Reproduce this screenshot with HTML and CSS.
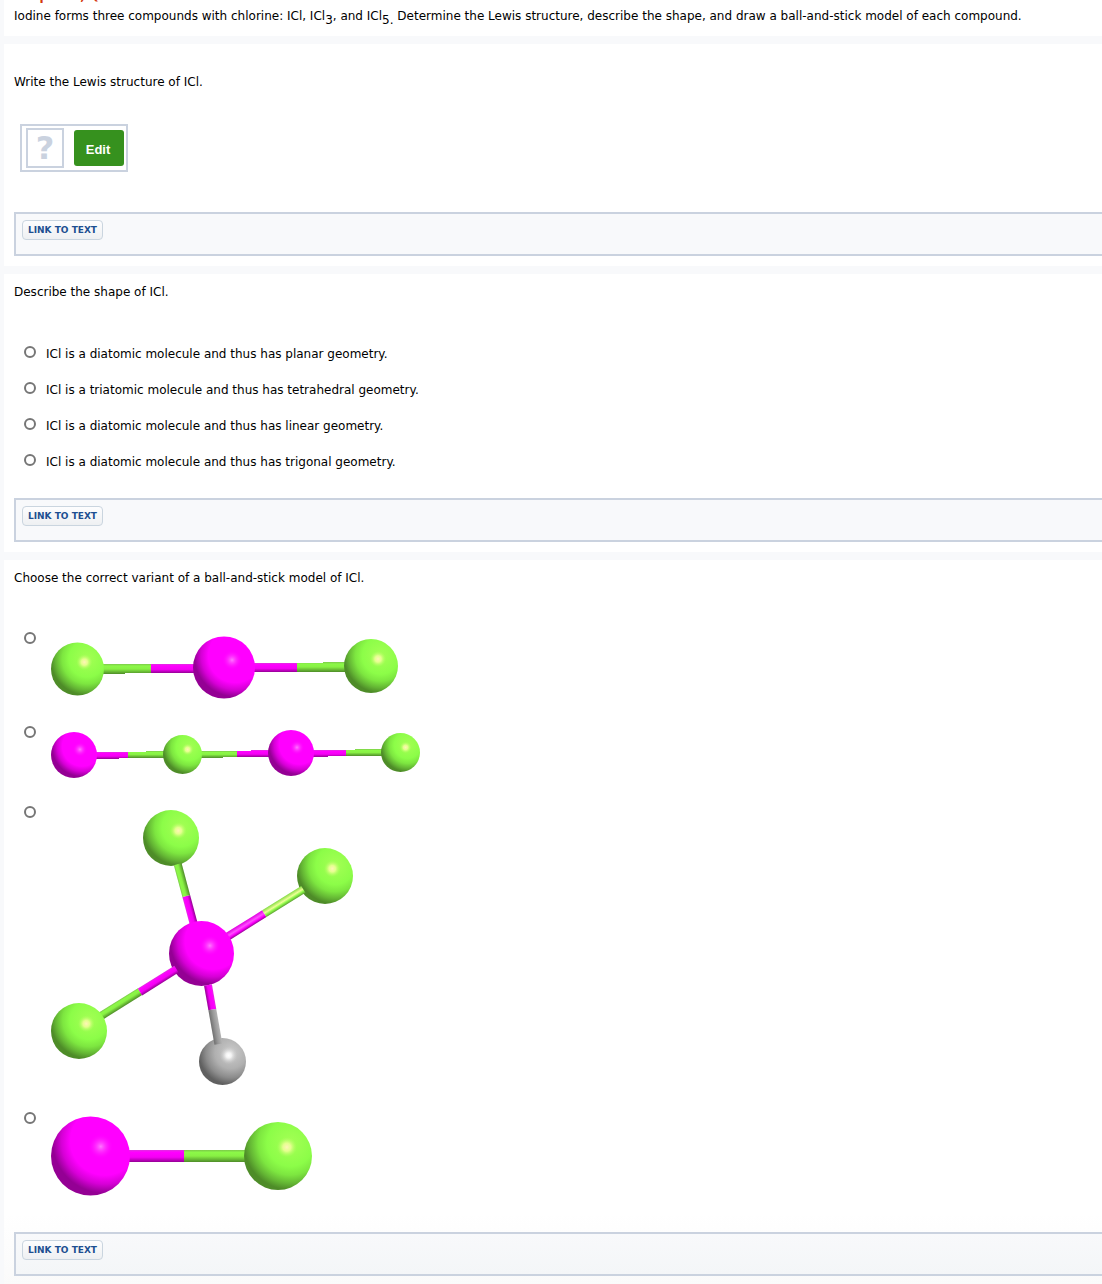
FILE: index.html
```html
<!DOCTYPE html>
<html lang="en">
<head>
  <meta charset="UTF-8">
  <meta name="viewport" content="width=device-width, initial-scale=1.0">
  <title>Chapter 5, Question 27</title>
  <link rel="stylesheet" href="styles.css">
</head>
<body>
  <!-- shared gradients for the molecule drawings -->
  <svg class="defs" width="0" height="0" aria-hidden="true">
    <defs>
      <radialGradient id="green" cx=".68" cy=".31" r=".76">
        <stop offset="0" stop-color="#a4ff54"/>
        <stop offset=".45" stop-color="#8cfd48"/>
        <stop offset=".62" stop-color="#7de640"/>
        <stop offset=".78" stop-color="#64b634"/>
        <stop offset=".9" stop-color="#4e8c28"/>
        <stop offset="1" stop-color="#4e8c28"/>
      </radialGradient>
      <radialGradient id="pink" cx=".68" cy=".31" r=".76">
        <stop offset="0" stop-color="#ff00ff"/>
        <stop offset=".57" stop-color="#ff00ff"/>
        <stop offset=".72" stop-color="#d600d6"/>
        <stop offset=".87" stop-color="#940094"/>
        <stop offset="1" stop-color="#940094"/>
      </radialGradient>
      <radialGradient id="gray" cx=".68" cy=".31" r=".76">
        <stop offset="0" stop-color="#cccccc"/>
        <stop offset=".45" stop-color="#b0b0b0"/>
        <stop offset=".7" stop-color="#8c8c8c"/>
        <stop offset=".9" stop-color="#606060"/>
        <stop offset="1" stop-color="#606060"/>
      </radialGradient>
      <radialGradient id="shineGreen">
        <stop offset="0" stop-color="#fff4b8"/>
        <stop offset=".4" stop-color="#f0ff98" stop-opacity=".85"/>
        <stop offset="1" stop-color="#b0ff60" stop-opacity="0"/>
      </radialGradient>
      <radialGradient id="shinePink">
        <stop offset="0" stop-color="#ff78ff"/>
        <stop offset="1" stop-color="#ff00ff" stop-opacity="0"/>
      </radialGradient>
      <radialGradient id="shineGray">
        <stop offset="0" stop-color="#ffffff"/>
        <stop offset=".3" stop-color="#ffffff" stop-opacity=".8"/>
        <stop offset="1" stop-color="#cccccc" stop-opacity="0"/>
      </radialGradient>
      <linearGradient id="rodGreen" x2="0" y2="1">
        <stop offset="0" stop-color="#7cc94a"/>
        <stop offset=".2" stop-color="#8cf848"/>
        <stop offset=".5" stop-color="#88f044"/>
        <stop offset="1" stop-color="#4e8c28"/>
      </linearGradient>
      <linearGradient id="rodPink" x2="0" y2="1">
        <stop offset="0" stop-color="#e030e0"/>
        <stop offset=".2" stop-color="#ff00ff"/>
        <stop offset=".6" stop-color="#f400f4"/>
        <stop offset="1" stop-color="#940094"/>
      </linearGradient>
      <linearGradient id="rodGray" x2="0" y2="1">
        <stop offset="0" stop-color="#b4b4b4"/>
        <stop offset=".5" stop-color="#989898"/>
        <stop offset="1" stop-color="#707070"/>
      </linearGradient>
      <linearGradient id="rodGreenLit" x2="0" y2="1">
        <stop offset="0" stop-color="#84dc44"/>
        <stop offset=".45" stop-color="#eeff98"/>
        <stop offset=".7" stop-color="#8cfa48"/>
        <stop offset="1" stop-color="#5ca032"/>
      </linearGradient>
      <linearGradient id="rodPinkLit" x2="0" y2="1">
        <stop offset="0" stop-color="#e000e0"/>
        <stop offset=".45" stop-color="#ff50ff"/>
        <stop offset=".7" stop-color="#ff00ff"/>
        <stop offset="1" stop-color="#980098"/>
      </linearGradient>
      <symbol id="cl" viewBox="0 0 100 100">
        <circle cx="50" cy="50" r="50" fill="url(#green)"/>
        <circle cx="63" cy="37" r="15" fill="url(#shineGreen)"/>
      </symbol>
      <symbol id="i" viewBox="0 0 100 100">
        <circle cx="50" cy="50" r="50" fill="url(#pink)"/>
        <circle cx="63" cy="38" r="16" fill="url(#shinePink)"/>
      </symbol>
      <symbol id="x" viewBox="0 0 100 100">
        <circle cx="50" cy="50" r="50" fill="url(#gray)"/>
        <circle cx="63" cy="37" r="19" fill="url(#shineGray)"/>
      </symbol>
    </defs>
  </svg>

  <div class="panel intro">
    <h1>Chapter 5, Question 27</h1>
    <p>Iodine forms three compounds with chlorine: ICl, ICl<sub>3</sub>, and ICl<sub>5.</sub> Determine the Lewis structure, describe the shape, and draw a ball-and-stick model of each compound.</p>
  </div>

  <div class="panel lewis">
    <p>Write the Lewis structure of ICl.</p>
    <div class="sketch">
      <span class="unknown">?</span>
      <button type="button" class="edit">Edit</button>
    </div>
    <div class="linkbar"><a href="#">LINK TO TEXT</a></div>
  </div>

  <div class="panel shape">
    <p id="shapeq">Describe the shape of ICl.</p>
    <div class="options" role="radiogroup" aria-labelledby="shapeq">
      <label><input type="radio" name="shape"><span>ICl is a diatomic molecule and thus has planar geometry.</span></label>
      <label><input type="radio" name="shape"><span>ICl is a triatomic molecule and thus has tetrahedral geometry.</span></label>
      <label><input type="radio" name="shape"><span>ICl is a diatomic molecule and thus has linear geometry.</span></label>
      <label><input type="radio" name="shape"><span>ICl is a diatomic molecule and thus has trigonal geometry.</span></label>
    </div>
    <div class="linkbar"><a href="#">LINK TO TEXT</a></div>
  </div>

  <div class="panel model">
    <p id="modelq">Choose the correct variant of a ball-and-stick model of ICl.</p>
    <div class="models" role="radiogroup" aria-labelledby="modelq">
      <label>
        <input type="radio" name="model">
        <svg width="348" height="64" viewBox="0 0 348 64" role="img" aria-label="Green, pink, green">
          <path d="M50 28h50v9H74v1H50z" fill="url(#rodGreen)"/>
          <path d="M100 28h50v9h-50z" fill="url(#rodPink)"/>
          <path d="M200 27h46v9h-46z" fill="url(#rodPink)"/>
          <path d="M246 27h26v-1h26v10h-52z" fill="url(#rodGreen)"/>
          <use href="#cl" x="0" y="6" width="53" height="54"/>
          <use href="#i" x="142" y="0" width="62" height="63"/>
          <use href="#cl" x="293" y="3" width="54" height="54"/>
        </svg>
      </label>
      <label>
        <input type="radio" name="model">
        <svg width="370" height="50" viewBox="0 0 370 50" role="img" aria-label="Pink, green, pink, green">
          <path d="M43 22h34v6h-9v1H43z" fill="url(#rodPink)"/>
          <path d="M77 22h18v-1h20v7H77z" fill="url(#rodGreen)"/>
          <path d="M148 21h38v6h-14v1h-24z" fill="url(#rodGreen)"/>
          <path d="M186 21h14v-1h21v7h-35z" fill="url(#rodPink)"/>
          <path d="M260 20h35v6h-18v1h-17z" fill="url(#rodPink)"/>
          <path d="M295 20h9v-1h28v7h-37z" fill="url(#rodGreen)"/>
          <use href="#i" x="0" y="2" width="46" height="46"/>
          <use href="#cl" x="112" y="5" width="39" height="39"/>
          <use href="#i" x="217" y="0" width="46" height="46"/>
          <use href="#cl" x="330" y="3" width="39" height="39"/>
        </svg>
      </label>
      <label>
        <input type="radio" name="model">
        <svg width="302" height="276" viewBox="0 0 302 276" role="img" aria-label="Pink centre with three green balls and one gray ball">
          <use href="#cl" x="92" y="0" width="56" height="56"/>
          <g transform="translate(143 115) rotate(-105)">
            <path d="M0-4h30v8H0z" fill="url(#rodPink)"/>
            <path d="M30-4h33v8H30z" fill="url(#rodGreen)"/>
          </g>
          <use href="#cl" x="246" y="38" width="56" height="56"/>
          <g transform="translate(176 127) rotate(-32)">
            <path d="M0-4h44v8H0z" fill="url(#rodPinkLit)"/>
            <path d="M44-4h46v8H44z" fill="url(#rodGreenLit)"/>
          </g>
          <g transform="translate(50 206) rotate(-32)">
            <path d="M0-4h46v8H0z" fill="url(#rodGreen)"/>
          </g>
          <use href="#i" x="118" y="111" width="65" height="65"/>
          <g transform="translate(89 182) rotate(-32)">
            <path d="M0-4h43v8H0z" fill="url(#rodPink)"/>
          </g>
          <use href="#cl" x="0" y="193" width="56" height="56"/>
          <use href="#x" x="148" y="228" width="47" height="47"/>
          <g transform="translate(157 175) rotate(80)">
            <path d="M0-4h25v8H0z" fill="url(#rodPink)"/>
            <path d="M25-4h35v8H25z" fill="url(#rodGray)"/>
          </g>
        </svg>
      </label>
      <label>
        <input type="radio" name="model">
        <svg width="262" height="80" viewBox="0 0 262 80" role="img" aria-label="Pink, green">
          <path d="M76 34h57v12H76z" fill="url(#rodPink)"/>
          <path d="M133 34h65v12h-65z" fill="url(#rodGreen)"/>
          <use href="#i" x="0" y="0" width="79" height="80"/>
          <use href="#cl" x="193" y="6" width="68" height="68"/>
        </svg>
      </label>
    </div>
    <div class="linkbar"><a href="#">LINK TO TEXT</a></div>
  </div>
</body>
</html>
```

FILE: styles.css
```css
body {
  font-family: Verdana, "DejaVu Sans", sans-serif;
  font-size: 12px;
  line-height: 16px;
  color: #000;
  background: #f8f9fb;
  margin: 0;
  padding-left: 4px;
  overflow: hidden;
}
p, h1 {
  margin: 0;
}
.defs {
  position: absolute;
}
.panel {
  background: #fff;
  padding: 10px 0 10px 10px;
  margin-bottom: 8px;
}
.intro {
  padding-top: 0;
  padding-bottom: 12px;
}
.intro h1 {
  font-size: 12px;
  line-height: 16px;
  color: #d4380d;
  margin-top: -12px;
  margin-bottom: 4px;
}
.intro sub {
  font-size: 12px;
  line-height: 0;
  vertical-align: -4px;
}
.lewis {
  padding-top: 30px;
}
.sketch {
  display: inline-flex;
  align-items: center;
  gap: 10px;
  margin: 34px 6px 40px;
  padding: 2px 2px 2px 4px;
  border: 2px solid #cad2df;
}
.unknown {
  width: 34px;
  height: 36px;
  border: 2px solid #cad2df;
  color: #cad2df;
  font-size: 32px;
  font-weight: bold;
  line-height: 36px;
  text-align: center;
}
.edit {
  width: 50px;
  height: 36px;
  padding: 2px 2px 0 0;
  border: none;
  border-radius: 3px;
  background: #36911e;
  color: #fff;
  font: bold 13px "Liberation Sans", sans-serif;
  cursor: pointer;
}
.linkbar {
  display: flex;
  align-items: flex-start;
  height: 28px;
  padding: 6px;
  border: 2px solid #cad2df;
  border-right: none;
  background: #f8f9fb;
}
.linkbar a {
  padding: 1px 5px 0;
  border: 1px solid #cad5df;
  border-radius: 4px;
  background: linear-gradient(#fdfdfe, #eef0f2);
  color: #1d4f91;
  font-size: 9px;
  font-weight: bold;
  line-height: 17px;
  text-decoration: none;
}
input[type="radio"] {
  appearance: none;
  flex: none;
  width: 12px;
  height: 12px;
  margin: 0;
  border: 2px solid #767676;
  border-radius: 50%;
  background: #fff;
}
.options label, .models label {
  display: flex;
  align-items: flex-start;
}
.options {
  display: grid;
  gap: 20px;
  padding: 46px 10px 28px;
}
.options label {
  gap: 10px;
}
.model {
  background: linear-gradient(#fff 90%, #fafafa);
}
.model .linkbar {
  background: linear-gradient(#f8f9fb, #f4f6f8);
}
.models {
  display: grid;
  padding: 46px 10px 36px;
}
.models label {
  gap: 15px;
}
.models svg {
  display: block;
  margin-top: 4px;
}
.models label:not(:last-child) {
  padding-bottom: 26px;
}
```
